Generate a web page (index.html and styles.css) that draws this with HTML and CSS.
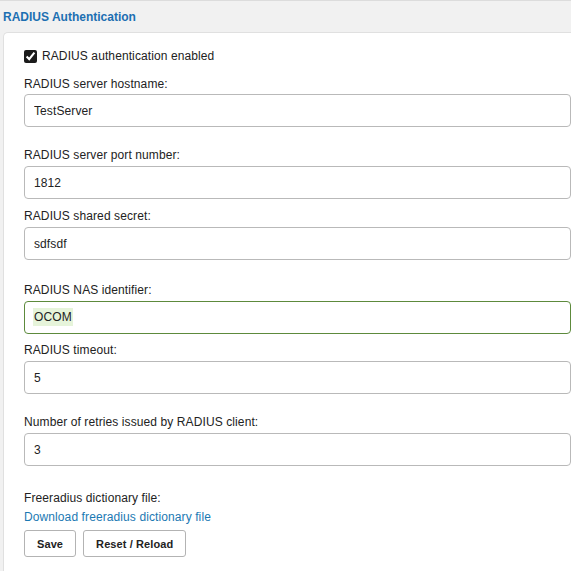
FILE: index.html
```html
<!DOCTYPE html>
<html>
<head>
<meta charset="utf-8">
<link rel="stylesheet" href="styles.css">
</head>
<body>
<div class="panel-header">RADIUS Authentication</div>
<div class="card">
  <label class="check-row"><input type="checkbox" checked><span>RADIUS authentication enabled</span></label>

  <div class="group group-first group-wide">
    <div class="label">RADIUS server hostname:</div>
    <input class="field" type="text" value="TestServer">
  </div>
  <div class="group">
    <div class="label">RADIUS server port number:</div>
    <input class="field" type="text" value="1812">
  </div>
  <div class="group group-wider">
    <div class="label">RADIUS shared secret:</div>
    <input class="field" type="text" value="sdfsdf">
  </div>
  <div class="group group-tight">
    <div class="label">RADIUS NAS identifier:</div>
    <div class="field field-valid"><span class="hl">OCOM</span></div>
  </div>
  <div class="group group-wide">
    <div class="label">RADIUS timeout:</div>
    <input class="field" type="text" value="5">
  </div>
  <div class="group group-last">
    <div class="label">Number of retries issued by RADIUS client:</div>
    <input class="field" type="text" value="3">
  </div>

  <div class="label">Freeradius dictionary file:</div>
  <a class="link" href="#">Download freeradius dictionary file</a>
  <div class="buttons">
    <button class="btn">Save</button>
    <button class="btn">Reset / Reload</button>
  </div>
</div>
</body>
</html>
```

FILE: styles.css
```css
html, body {
  margin: 0;
  padding: 0;
  background: #f1f1f1;
  font-family: "Liberation Sans", Arial, sans-serif;
  font-size: 12px;
  letter-spacing: 0.1px;
  color: #222;
  overflow: hidden;
}

.panel-header {
  border-top: 1px solid #dcdcdc;
  padding-left: 3px;
  box-sizing: border-box;
  height: 32px;
  line-height: 32px;
  font-weight: bold;
  color: #1c6fb1;
  font-size: 12px;
  letter-spacing: 0;
}

.card {
  box-sizing: border-box;
  margin-left: 3px;
  background: #fff;
  border-top: 1px solid #e0e0e0;
  border-left: 1px solid #e0e0e0;
  border-top-left-radius: 5px;
  padding: 15px 0 10px 20px;
  height: calc(100vh - 32px);
  overflow: hidden;
}

.check-row {
  display: flex;
  align-items: center;
  height: 16px;
  line-height: 16px;
}

.check-row input {
  width: 13px;
  height: 13px;
  margin: 0 5px 0 0;
  accent-color: #1b1b1b;
}

.group {
  margin-bottom: 9px;
}

.group-first {
  margin-top: 12px;
}

.group-wide {
  margin-bottom: 20px;
}

.group-wider {
  margin-bottom: 22px;
}

.group-tight {
  margin-bottom: 8px;
}

.group-last {
  margin-bottom: 24px;
}

.label {
  height: 16px;
  line-height: 16px;
}

.field {
  display: block;
  box-sizing: border-box;
  width: 547px;
  height: 33px;
  margin: 3px 0 0 0;
  padding: 0 9px;
  border: 1px solid #b9b9b9;
  border-radius: 4px;
  background: #fff;
  font-family: "Liberation Sans", Arial, sans-serif;
  font-size: 12px;
  letter-spacing: 0.1px;
  color: #222;
  outline: none;
  line-height: 31px;
}

.group-first .field {
  margin-top: 2px;
}

.field-valid {
  border-color: #5d8a3c;
  padding-left: 8px;
}

.hl {
  background: #e6f4da;
  padding: 2px 1px;
}

.link {
  display: block;
  margin-top: 3px;
  height: 16px;
  line-height: 16px;
  color: #1b79b3;
  text-decoration: none;
}

.buttons {
  display: flex;
  gap: 7px;
  margin-top: 5px;
}

.btn {
  height: 27px;
  padding: 0 12px;
  border: 1px solid #b3b3b3;
  border-radius: 3px;
  background: #fff;
  font-family: "Liberation Sans", Arial, sans-serif;
  font-size: 11px;
  font-weight: bold;
  letter-spacing: 0.1px;
  color: #222;
}
```
